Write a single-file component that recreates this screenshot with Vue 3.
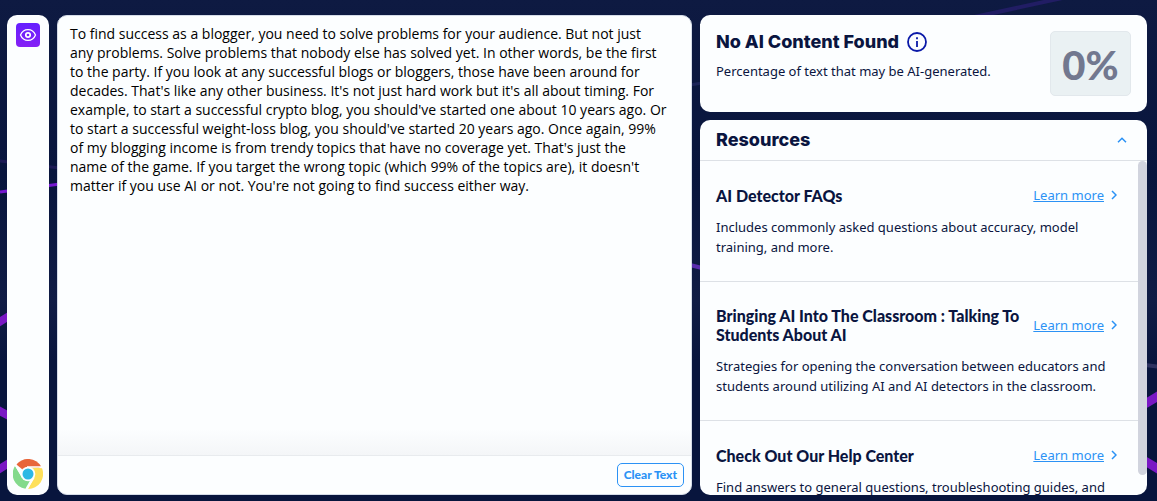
<script setup>
import { ref } from 'vue'

const text = ref([
  'To find success as a blogger, you need to solve problems for your audience. But not just',
  'any problems. Solve problems that nobody else has solved yet. In other words, be the first',
  'to the party. If you look at any successful blogs or bloggers, those have been around for',
  "decades. That's like any other business. It's not just hard work but it's all about timing. For",
  "example, to start a successful crypto blog, you should've started one about 10 years ago. Or",
  "to start a successful weight-loss blog, you should've started 20 years ago. Once again, 99%",
  "of my blogging income is from trendy topics that have no coverage yet. That's just the",
  "name of the game. If you target the wrong topic (which 99% of the topics are), it doesn't",
  "matter if you use AI or not. You're not going to find success either way."
].join('\n'))
const open = ref(true)
const resources = [
  { title: 'AI Detector FAQs', body: 'Includes commonly asked questions about accuracy, model training, and more.' },
  { title: 'Bringing AI Into The Classroom : Talking To Students About AI', body: 'Strategies for opening the conversation between educators and students around utilizing AI and AI detectors in the classroom.' },
  { title: 'Check Out Our Help Center', body: 'Find answers to general questions, troubleshooting guides, and' }
]
</script>

<template>
  <div class="page">
    <svg class="backdrop" viewBox="0 0 1157 501" preserveAspectRatio="none" aria-hidden="true">
      <g fill="none">
        <path d="M970 18 L1067 -3" stroke="#211d64" stroke-width="4" />
        <path d="M0 161 L60 168" stroke="#1d1b55" stroke-width="3" />
        <path d="M0 192 L60 184" stroke="#7518cf" stroke-width="3" />
        <path d="M690 85 L702 83" stroke="#1c2458" stroke-width="3" />
        <path d="M690 265 L702 268" stroke="#5a2cae" stroke-width="4" />
        <path d="M1145 365 L1160 367" stroke="#2d3260" stroke-width="4" />
        <path d="M-2 323 L9 316 M-2 410 L9 416 M-2 470 L9 463" stroke="#7a18c4" stroke-width="8" />
        <path d="M1145 404 L1160 395 M1145 461 L1160 470" stroke="#7a18c4" stroke-width="9" />
      </g>
    </svg>

    <nav class="rail card" aria-label="Tools">
      <button class="eye" type="button" aria-label="AI detector">
        <svg width="24" height="24" viewBox="0 0 24 24" fill="none" stroke="#fff">
          <path d="M4.500 12 C7.500 4.800 16.500 4.800 19.500 12 C16.500 19.200 7.500 19.200 4.500 12 Z" stroke-width="1.300" />
          <circle cx="12" cy="12" r="2.200" stroke-width="1.700" />
        </svg>
      </button>
      <a class="chrome" href="#" aria-label="Chrome extension">
        <svg width="30" height="30" viewBox="0 0 30 30">
          <path d="M15 15 L3.400 5.500 A15 15 0 0 1 28.100 7.600 Z" fill="#e8653a" />
          <path d="M15 8 L29 9.300 A15 15 0 0 1 15 30 L21.200 18.500 Z" fill="#fee05a" />
          <path d="M9 18.500 L2 6.900 A15 15 0 0 0 12.400 29.800 L19 18 Z" fill="#84da8c" />
          <path d="M2.300 5.500 L9.500 18 M14 8 H30 M20.800 18.500 L13.300 31" stroke="#fdfeff" stroke-width="1.700" fill="none" />
          <circle cx="15" cy="15" r="7.300" fill="#fdfeff" />
          <circle cx="15" cy="15" r="5.500" fill="#2eb8e4" />
        </svg>
      </a>
    </nav>

    <main class="editor card">
      <textarea v-model="text" aria-label="Text to analyze" spellcheck="false"></textarea>
      <div class="toolbar">
        <button class="clear" type="button" @click="text = ''">Clear Text</button>
      </div>
    </main>

    <aside class="side">
      <section class="result card">
        <div>
          <div class="headline">
            <h2>No AI Content Found</h2>
            <button class="info" type="button" aria-label="About this score">
              <svg width="20" height="20" viewBox="0 0 20 20" fill="none" stroke="#0b1aa8">
                <circle cx="10" cy="10" r="9" stroke-width="1.800" />
                <path d="M10 9 V15 M10 5.300 V7.200" stroke-width="1.800" />
              </svg>
            </button>
          </div>
          <p>Percentage of text that may be AI-generated.</p>
        </div>
        <output class="score">0%</output>
      </section>

      <section class="resources card">
        <header>
          <h2>Resources</h2>
          <button class="toggle" type="button" aria-label="Toggle resources" :aria-expanded="open" @click="open = !open">
            <svg width="10" height="6" viewBox="0 0 10 6" fill="none" stroke="#2b92f5" stroke-width="1.500"><path d="M1 5.200 L5 1.200 L9 5.200" /></svg>
          </button>
        </header>
        <div v-if="open" class="scroller">
          <div class="list">
            <article v-for="item in resources" :key="item.title">
              <div class="row">
                <h3>{{ item.title }}</h3>
                <a href="#"><span>Learn more</span>
                  <svg width="6" height="10" viewBox="0 0 6 10" fill="none" stroke="currentColor" stroke-width="1.500"><path d="M1 1 L5 5 L1 9" /></svg>
                </a>
              </div>
              <p>{{ item.body }}</p>
            </article>
          </div>
          <div class="track"><div class="thumb"></div></div>
        </div>
      </section>
    </aside>
  </div>
</template>

<style>
body { background: #08153d; }
</style>

<style scoped>
* { box-sizing: border-box; }
h2, h3, p { margin: 0; }
button { padding: 0; border: 0; background: none; cursor: pointer; }
svg { display: block; }
.page {
  position: relative;
  display: grid;
  grid-template-columns: 42px minmax(0, 635fr) minmax(0, 447fr);
  gap: 8px;
  height: 100vh;
  padding: 15px 10px 6px 7px;
  overflow: hidden;
  background: linear-gradient(#0e1a42, #08153d 35%, #101c45 60%, #08153d 72%);
  color: #0a1540;
  font-family: Lato, "Noto Sans", sans-serif;
}
.backdrop { position: absolute; inset: 0; width: 100%; height: 100%; }
.card { position: relative; background: #fcfeff; border-radius: 10px; overflow: hidden; }
.rail { display: flex; flex-direction: column; align-items: center; justify-content: space-between; padding: 8px 0 6px; }
.eye { width: 24px; height: 24px; border-radius: 4px; background: linear-gradient(#651fff, #8620f5); }
.editor { display: flex; flex-direction: column; border: 1px solid #d5dce8; }
textarea {
  flex: 1;
  min-height: 0;
  padding: 8px 12px;
  border: 0;
  outline: 0;
  resize: none;
  background: linear-gradient(transparent 94%, #f4f6f8);
  color: #000;
  font: 14px/19px "Open Sans", sans-serif;
}
.toolbar { display: flex; justify-content: flex-end; padding: 7px; border-top: 1px solid #e8ebee; }
.clear { height: 24px; padding: 0 6px; border: 1px solid #2b92f5; border-radius: 5px; color: #2b92f5; font: 900 12px/16px Lato, sans-serif; }
.side { display: flex; flex-direction: column; gap: 8px; min-height: 0; }
.result { display: flex; justify-content: space-between; align-items: flex-start; padding: 16px; }
.headline { display: flex; align-items: center; gap: 8px; }
h2 { font: 800 18px/22px Inter, sans-serif; }
.result p { margin-top: 8px; font: 13px/20px "Noto Sans", sans-serif; }
.score { width: 81px; height: 65px; border: 1px solid #e2e8ec; border-radius: 5px; background: #eaf1f3; color: #72788f; text-align: center; font: 900 40px/66px Lato, sans-serif; }
.resources { display: flex; flex: 1; flex-direction: column; min-height: 0; }
header { display: flex; align-items: center; justify-content: space-between; height: 41px; padding: 0 20px 0 16px; border-bottom: 1px solid #dde1e6; }
.scroller { display: flex; flex: 1; min-height: 0; }
.list { flex: 1; overflow-y: auto; scrollbar-width: none; }
.track { width: 9px; }
.thumb { height: 94%; border-radius: 5px; background: #d1d4de; }
article { padding: 24px 21px 24px 16px; border-bottom: 1px solid #dde1e6; }
.row { display: flex; align-items: center; justify-content: space-between; }
h3 { font: 900 16px/19px Lato, sans-serif; }
a { color: #2b92f5; }
.row a { display: flex; flex: none; align-items: center; gap: 7px; font: 13px/20px "Noto Sans", sans-serif; text-decoration: none; }
.row span { text-decoration: underline; }
article p { margin-top: 12px; font: 13px/20px "Noto Sans", sans-serif; }
</style>
